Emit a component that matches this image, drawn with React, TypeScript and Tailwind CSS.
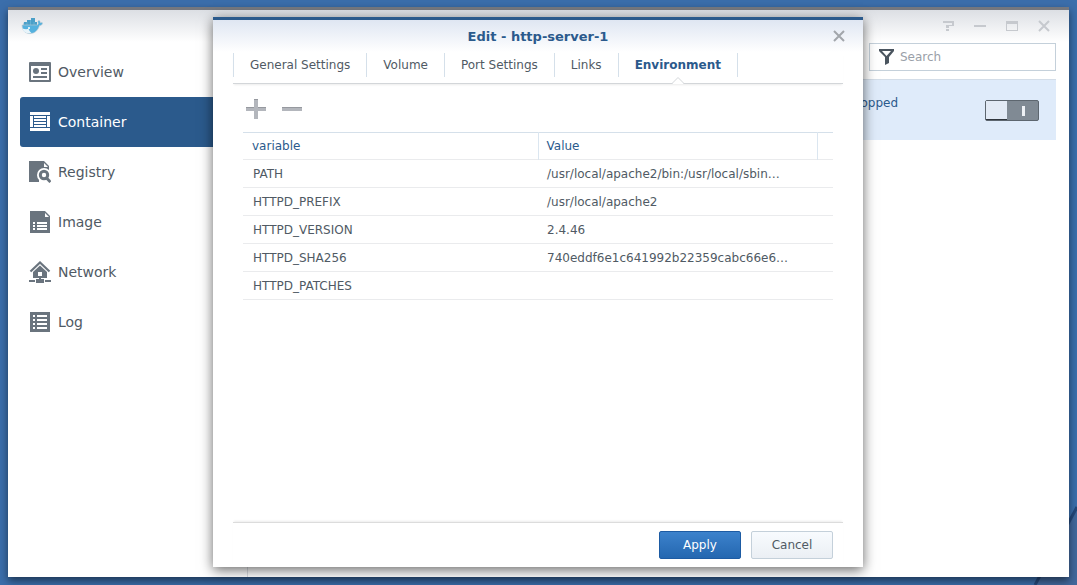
import type { ReactNode } from "react";

interface NavItem {
  label: string;
  icon: ReactNode;
  active?: boolean;
}

const NAV_ITEMS: NavItem[] = [
  { label: "Overview", icon: <OverviewIcon /> },
  { label: "Container", icon: <ContainerIcon />, active: true },
  { label: "Registry", icon: <RegistryIcon /> },
  { label: "Image", icon: <ImageIcon /> },
  { label: "Network", icon: <NetworkIcon /> },
  { label: "Log", icon: <LogIcon /> },
];

const TABS = [
  "General Settings",
  "Volume",
  "Port Settings",
  "Links",
  "Environment",
];

const VARIABLES = [
  { name: "PATH", value: "/usr/local/apache2/bin:/usr/local/sbin…" },
  { name: "HTTPD_PREFIX", value: "/usr/local/apache2" },
  { name: "HTTPD_VERSION", value: "2.4.46" },
  { name: "HTTPD_SHA256", value: "740eddf6e1c641992b22359cabc66e6…" },
  { name: "HTTPD_PATCHES", value: "" },
];

function OverviewIcon() {
  return (
    <svg width="22" height="22" viewBox="0 0 22 22" aria-hidden="true">
      <path fill="currentColor" d="M1 1h20q1 0 1 1v18q0 1-1 1H1q-1 0-1-1V2q0-1 1-1z" />
      <path fill="#fff" d="M2 5h18v14H2z" />
      <circle cx="7" cy="10" r="3" fill="currentColor" />
      <path fill="currentColor" d="M12 7h6v2h-6zM12 11h6v2h-6zM4 15h14v2H4z" />
    </svg>
  );
}

function ContainerIcon() {
  return (
    <svg width="22" height="22" viewBox="0 0 22 22" aria-hidden="true">
      <path
        fill="currentColor"
        d="M1 1h20v3H1zM1 17h20v3H1zM1 5h3v11H1zM18 5h3v11h-3zM5 5h12v2H5zM5 8h12v2H5zM5 11h12v2H5zM5 14h12v2H5z"
      />
    </svg>
  );
}

function RegistryIcon() {
  return (
    <svg width="22" height="22" viewBox="0 0 22 22" aria-hidden="true">
      <path fill="currentColor" d="M0 0h15l5 5v16H0z" />
      <path fill="#fff" d="M15 2v4h4z" />
      <circle cx="15" cy="14" r="7" fill="#fff" />
      <path fill="#fff" d="M10 18h12v4H10z" />
      <circle cx="15" cy="14" r="3.700" fill="none" stroke="currentColor" strokeWidth="3" />
      <path stroke="currentColor" strokeWidth="3" d="m17.500 17 4 4" />
    </svg>
  );
}

function ImageIcon() {
  return (
    <svg width="22" height="22" viewBox="0 0 22 22" aria-hidden="true">
      <path fill="currentColor" d="M1 0h15l5 5v17H1z" />
      <path fill="#fff" d="M16 2v4h4zM4 11h2v2H4zM8 11h10v2H8zM4 14h2v2H4zM8 14h10v2H8zM4 17h2v2H4zM8 17h10v2H8z" />
    </svg>
  );
}

function NetworkIcon() {
  return (
    <svg width="22" height="22" viewBox="0 0 22 22" aria-hidden="true">
      <path fill="none" stroke="currentColor" strokeWidth="2.200" d="m1.500 10.500 9.500-9 9.500 9" />
      <path fill="currentColor" d="m11 4.500 7 6.500v6H4v-6z" />
      <path fill="#fff" d="M9 11h4v4H9z" />
      <path fill="currentColor" d="M0 19h6v2H0zM16 19h6v2h-6zM10 16h2v2h3v4H7v-4h3z" />
    </svg>
  );
}

function LogIcon() {
  return (
    <svg width="22" height="22" viewBox="0 0 22 22" aria-hidden="true">
      <path fill="currentColor" d="M1 1h20v20H1z" />
      <path
        fill="#fff"
        d="M4 4h2v2H4zM8 4h10v2H8zM4 8h2v2H4zM8 8h10v2H8zM4 12h2v2H4zM8 12h10v2H8zM4 16h2v2H4zM8 16h10v2H8z"
      />
    </svg>
  );
}

function WhaleLogo() {
  return (
    <svg width="22" height="18" viewBox="0 0 22 18" aria-hidden="true">
      <path fill="#4a9fc8" d="M3 5h3V3h4V1h4v4h2v5H2z" />
      <path stroke="#7fc0df" strokeWidth="0.500" d="M6 5v4M9.500 3v6M13 5v4" />
      <path
        fill="#54b1de"
        stroke="#c5cdd2"
        strokeWidth="0.600"
        d="M1 8h14.500c1.500 0 2-1 1.500-2.500-.4-1 .2-1.800 1-2.300.8.600 1.300 1.500 1.300 2.500.8-.2 1.800-.1 2.400.3-.5 1.800-1.600 2.600-3.200 2.600-1.500 4.700-4.500 8-9.500 8-4.500 0-7.700-2.500-8-8.600z"
      />
      <path fill="#e8f4fa" d="M1.300 11.500c2.500.8 4.500.8 6.200.3.5 1.500 1.500 3 3 4-4 1-8.300 0-9.200-4.300z" />
      <circle cx="8" cy="11" r="1" fill="#fff" />
    </svg>
  );
}

function WindowControls() {
  return (
    <div className="flex items-center gap-5 text-[#c6c9ce]">
      <button aria-label="Help">
        <svg width="12" height="12" viewBox="0 0 12 12" fill="currentColor">
          <path d="M1 1h11v5H7v2H4V5h6V3H1zM4 9h3v2H4z" />
        </svg>
      </button>
      <button aria-label="Minimize">
        <svg width="12" height="12" viewBox="0 0 12 12" fill="currentColor">
          <path d="M0 5h12v2H0z" />
        </svg>
      </button>
      <button aria-label="Maximize">
        <svg width="12" height="12" viewBox="0 0 12 12" fill="currentColor">
          <path fillRule="evenodd" d="M0 1h12v10H0zM1 4v6h10V4z" />
        </svg>
      </button>
      <button aria-label="Close window">
        <svg width="12" height="12" viewBox="0 0 12 12" fill="none" stroke="currentColor" strokeWidth="2">
          <path d="m1 1 10 10M11 1 1 11" />
        </svg>
      </button>
    </div>
  );
}

function Sidebar() {
  return (
    <nav className="w-[239px] shrink-0 pt-[5px] pl-3">
      {NAV_ITEMS.map((item) => (
        <a
          key={item.label}
          href="#"
          className={
            item.active
              ? "flex h-[50px] items-center gap-[7px] rounded-[3px] bg-[#2b5a8c] pl-[9px] text-sm text-white"
              : "flex h-[50px] items-center gap-[7px] pl-[9px] text-sm text-[#505a64]"
          }
        >
          <span className={item.active ? "text-white" : "text-[#6a747e]"}>
            {item.icon}
          </span>
          {item.label}
        </a>
      ))}
    </nav>
  );
}

function ContainerList() {
  return (
    <main className="flex min-w-0 flex-1 flex-col gap-2 border-l border-[#dcdfe3] pt-px pr-[13px]">
      <label className="flex h-7 w-[187px] items-center gap-1 self-end border border-[#c4d0da] bg-white pl-2">
        <svg width="18" height="18" viewBox="0 0 18 18" className="shrink-0" aria-hidden="true">
          <path fill="#4b555f" fillRule="evenodd" d="M1 1h15v2l-5 6v6l-4 2V9L1 3zM4 3l4.500 5L13 3z" />
        </svg>
        <input
          type="text"
          aria-label="Search"
          placeholder="Search"
          className="w-full min-w-0 bg-transparent text-xs outline-none placeholder:text-[#9aa0a8]"
        />
      </label>

      <div className="flex h-[61px] items-start justify-end border-t border-[#d3dde8] bg-[#dfebfa] pr-[17px]">
        <span className="mr-[87px] pt-[15px] text-xs leading-4 text-[#2b5a8c]">Stopped</span>
        <input
          type="checkbox"
          role="switch"
          aria-label="Run container"
          className="mt-5 h-[21px] w-[54px] appearance-none rounded-xs border border-[#5d666f] bg-[#808a94] bg-[linear-gradient(#eef1f5,#eef1f5)] bg-size-[3px_10px] bg-position-[36px_5px] bg-no-repeat before:block before:h-[19px] before:w-[21px] before:border-b before:border-[#30353c] before:bg-[#e2eaf5]"
        />
      </div>
    </main>
  );
}

function EditDialog() {
  return (
    <div
      role="dialog"
      aria-label="Edit - http-server-1"
      className="flex w-full max-w-[650px] flex-col border-t-3 border-[#2b5a8c] bg-white bg-[linear-gradient(#dfe6f2,#fff_32px)] px-5 shadow-[0_3px_12px_rgba(0,0,0,0.600)]"
    >
      <div className="relative flex h-[33px] items-center justify-center">
        <h1 className="text-[13px] font-bold text-[#2b5a8c]">Edit - http-server-1</h1>
        <button aria-label="Close dialog" className="absolute top-[10px] -right-[2px] text-[#a2a6ab]">
          <svg width="12" height="12" viewBox="0 0 12 12" fill="none" stroke="currentColor" strokeWidth="2">
            <path d="m1 1 10 10M11 1 1 11" />
          </svg>
        </button>
      </div>

      <div role="tablist" className="flex h-[31px] border-b border-[#d3d6d9] text-xs shadow-[0_2px_2px_-1px_rgba(0,0,0,0.080)]">
        {TABS.map((tab) => {
          const active = tab === "Environment";
          return (
            <button
              key={tab}
              role="tab"
              aria-selected={active}
              className={
                active
                  ? "relative h-6 border-x border-[#d5e0ea] px-4 font-bold text-[#2b5a8c]"
                  : "h-6 border-l border-[#d5e0ea] px-4 text-[#505a64]"
              }
            >
              {tab}
              {active && (
                <svg
                  width="14"
                  height="7"
                  viewBox="0 0 14 7"
                  className="absolute top-6 left-1/2 -translate-x-1/2"
                  aria-hidden="true"
                >
                  <path fill="#fff" stroke="#d3d6d9" d="M0 6.500h1l6-6 6 6h1" />
                  <path fill="#fff" d="M2 6h10v1H2z" />
                </svg>
              )}
            </button>
          );
        })}
      </div>

      <div className="flex flex-1 flex-col px-[10px]">
        <div className="flex h-12 items-center gap-4 px-[3px] pt-[2px] text-[#b3b6bc]">
          <button aria-label="Add variable">
            <svg width="20" height="20" viewBox="0 0 20 20" fill="currentColor">
              <path d="M8 0h4v8h8v4h-8v8H8v-8H0V8h8z" />
              <path fill="#96999f" d="M8 0h4v1H8zM0 8h8v1H0zM12 8h8v1h-8z" />
            </svg>
          </button>
          <button aria-label="Remove variable">
            <svg width="20" height="20" viewBox="0 0 20 20" fill="currentColor">
              <path d="M0 8h20v4H0z" />
              <path fill="#96999f" d="M0 8h20v1H0z" />
            </svg>
          </button>
        </div>

        <table className="w-full table-fixed border-collapse text-left text-xs text-[#505a64]">
          <thead className="text-[#2b5a8c]">
            <tr className="h-[27px] border-y border-t-[#d5e0ea] border-b-[#eaebed]">
              <th className="w-1/2 border-r border-[#dbe6f0] px-[9px] font-normal">variable</th>
              <th className="border-r border-[#dbe6f0] px-2 font-normal">Value</th>
              <td className="w-4" />
            </tr>
          </thead>
          <tbody>
            {VARIABLES.map((item) => (
              <tr key={item.name} className="h-7 border-b border-[#eaebed]">
                <td className="px-[10px]">{item.name}</td>
                <td className="px-[9px]">{item.value}</td>
                <td />
              </tr>
            ))}
          </tbody>
        </table>
      </div>

      <div className="flex justify-end gap-[10px] border-t border-[#dcdcdc] px-[10px] py-2 text-xs shadow-[0_-2px_2px_-1px_rgba(0,0,0,0.080)]">
        <button className="h-7 w-[82px] rounded-xs border border-[#1d5ba3] bg-linear-to-b from-[#3c82cc] to-[#2467b0] text-white">
          Apply
        </button>
        <button className="h-7 w-[82px] rounded-xs border border-[#c4d0da] bg-linear-to-b from-[#f8fbfe] to-[#ebeff4] text-[#505a64]">
          Cancel
        </button>
      </div>
    </div>
  );
}

export default function App() {
  return (
    <div className="relative flex min-h-screen bg-[#3b6eab] px-2 pt-[7px] pb-2 font-['DejaVu_Sans',Verdana,sans-serif]">
      {/* crease in the wallpaper */}
      <svg width="44" height="80" viewBox="0 0 44 80" className="absolute right-0 bottom-0" aria-hidden="true">
        <path fill="#42689c" d="M44 2v78H2z" />
        <path fill="none" stroke="#24487a" strokeWidth="3" d="M44 2 2 80" />
      </svg>

      <div className="relative flex flex-1 flex-col border-t-3 border-[#74777e] bg-white bg-[linear-gradient(#dcdfe4,#fff_32px)] shadow-[0_4px_8px_rgba(0,0,0,0.500)]">
        <header className="flex h-8 items-center justify-between pr-[19px] pl-[13px]">
          <WhaleLogo />
          <WindowControls />
        </header>

        <div className="flex flex-1">
          <Sidebar />
          <ContainerList />
        </div>

        <div className="absolute inset-0 flex justify-center pt-[7px] pr-px pb-[10px]">
          <EditDialog />
        </div>
      </div>
    </div>
  );
}
